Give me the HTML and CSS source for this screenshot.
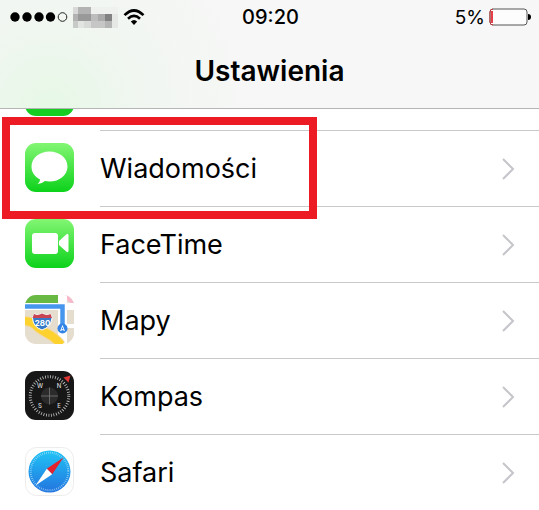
FILE: index.html
```html
<!DOCTYPE html>
<html lang="pl">
<head>
    <meta charset="UTF-8">
    <meta name="viewport" content="width=device-width, initial-scale=1.0">
    <title>Ustawienia</title>
    <link rel="stylesheet" href="styles.css">
</head>
<body>
    <header class="top-bar">
        <div class="status-bar">
            <div class="status-left">
                <svg class="signal" width="58" height="12" viewBox="0 0 58 12">
                    <circle cx="5" cy="6" r="4.7"/>
                    <circle cx="17" cy="6" r="4.7"/>
                    <circle cx="29" cy="6" r="4.7"/>
                    <circle cx="40.5" cy="6" r="4.7"/>
                    <circle cx="52.5" cy="6" r="4.3" fill="none" stroke="#222"/>
                </svg>
                <svg class="carrier" width="45" height="21" viewBox="0 0 45 21" shape-rendering="crispEdges">
                    <rect width="45" height="21" fill="#e6e8e6"/>
                    <rect y="0" width="5" height="7" fill="#d8d9d8"/>
                    <rect x="5" width="13" height="7" fill="#b3b3b3"/>
                    <rect x="18" width="27" height="7" fill="#eff1ef"/>
                    <rect y="7" width="5" height="7" fill="#b2b2b2"/>
                    <rect x="5" y="7" width="13" height="7" fill="#999"/>
                    <rect x="18" y="7" width="7" height="7" fill="#bdbdbd"/>
                    <rect x="25" y="7" width="7" height="7" fill="#aaa"/>
                    <rect x="32" y="7" width="7" height="7" fill="#828282"/>
                    <rect y="14" width="5" height="7" fill="#c8cac8"/>
                    <rect x="5" y="14" width="6" height="7" fill="#e1e4e1"/>
                    <rect x="11" y="14" width="7" height="7" fill="#d7dad7"/>
                    <rect x="18" y="14" width="14" height="7" fill="#c6c6c6"/>
                    <rect x="32" y="14" width="7" height="7" fill="#b4b4b4"/>
                </svg>
                <svg class="wifi" width="22" height="17" viewBox="0 0 22 17" fill="none" stroke="#000" stroke-width="2.6">
                    <path d="M1.5 6.2Q11-3.2 20.500 6.2"/>
                    <path d="M5 9.8Q11 4 17 9.8"/>
                    <path d="M7.8 12.600Q11 9.6 14.200 12.600L11 16Z" fill="#000" stroke="none"/>
                </svg>
            </div>
            <time class="clock">09:20</time>
            <div class="status-right">
                <span>5%</span>
                <svg class="battery" width="42" height="18" viewBox="0 0 42 18">
                    <rect x="1" y="1" width="37" height="16" rx="3" fill="#fdfdfd" stroke="#555"/>
                    <path d="M4 1Q1 1 1 4V14Q1 17 4 17" fill="none" stroke="#b33"/>
                    <rect x="2" y="3" width="2" height="12" fill="#e8404a"/>
                    <path d="M39 6Q42 6 42 9Q42 12 39 12Z"/>
                </svg>
            </div>
        </div>
        <h1>Ustawienia</h1>
    </header>

    <main class="settings-list">
        <!-- row scrolled under the top bar -->
        <div class="row row-clipped">
            <svg class="icon" viewBox="0 0 49 49"><rect width="49" height="49" rx="11" fill="#16cd22"/></svg>
            <div class="row-body"></div>
        </div>

        <a class="row highlighted" href="#messages">
            <svg class="icon" viewBox="0 0 49 49">
                <defs>
                    <linearGradient id="green" x1="0" y1="0" x2="0" y2="1">
                        <stop offset="0" stop-color="#83f673"/>
                        <stop offset="1" stop-color="#0cd21b"/>
                    </linearGradient>
                </defs>
                <rect width="49" height="49" rx="11" fill="url(#green)"/>
                <path d="M24.5 8.5C14.5 8.5 6.5 15 6.5 23.5C6.5 29 9.5 33.5 15 36.5C15 38.5 14 39.7 12.5 41C15.8 40.8 18.2 39.5 19.8 38.1C21.3 38.4 22.9 38.6 24.5 38.6C34.5 38.6 42.5 32 42.5 23.5C42.5 15 34.5 8.5 24.5 8.5Z" fill="#fff"/>
            </svg>
            <div class="row-body">
                <span>Wiadomości</span>
                <svg class="chevron" viewBox="0 0 14 22"><path d="M2 1L12 11L2 21"/></svg>
            </div>
        </a>

        <a class="row" href="#facetime">
            <svg class="icon" viewBox="0 0 49 49">
                <rect width="49" height="49" rx="11" fill="url(#green)"/>
                <rect x="7" y="14" width="26" height="21" rx="3" fill="#fff"/>
                <path d="M34 22L41.5 15.2Q43.5 14 43.5 16.5V31.5Q43.5 34 41.5 32.8L34 26Z" fill="#fff"/>
            </svg>
            <div class="row-body">
                <span>FaceTime</span>
                <svg class="chevron" viewBox="0 0 14 22"><path d="M2 1L12 11L2 21"/></svg>
            </div>
        </a>

        <a class="row" href="#maps">
            <svg class="icon" viewBox="0 0 49 49">
                <defs>
                    <clipPath id="tile"><rect width="49" height="49" rx="11"/></clipPath>
                </defs>
                <g clip-path="url(#tile)">
                    <rect width="49" height="49" fill="#e5ddce"/>
                    <rect width="34" height="8" fill="#68b944"/>
                    <path d="M41 0H49V8H46Q41 6 41 0Z" fill="#f8b8cb"/>
                    <path d="M0 8H49V15H0Z" fill="#fff"/>
                    <path d="M33 0H42V49H33Z" fill="#fff"/>
                    <path d="M41 29H49V33H41Z" fill="#fff"/>
                    <path d="M-2 26C8 26 10 30 15 34C21 39 27 38 36 50" fill="none" stroke="#f4d79a" stroke-width="10"/>
                    <path d="M-2 26C8 26 10 30 15 34C21 39 27 38 36 50" fill="none" stroke="#fdd22e" stroke-width="8"/>
                    <path d="M0 11.5H37.5V34" fill="none" stroke="#4796ee" stroke-width="4.5"/>
                    <path d="M9 19Q13 21 17 18.5Q21 21 25.5 19L27 23Q26 32 17 35Q8 32 7.5 23Z" fill="#3579c8" stroke="#fff"/>
                    <path d="M9 19Q13 21 17 18.5Q21 21 25.5 19L27 23H7.5Z" fill="#c84452"/>
                    <text class="shield-text" x="17.5" y="30.5" text-anchor="middle">280</text>
                    <circle cx="37.5" cy="33.5" r="5" fill="#3184e6"/>
                    <path d="M37.5 29.8L40 36.3L37.5 35L35 36.3Z" fill="#fff"/>
                    <path d="M37.5 32L38.5 34.5L37.5 34L36.5 34.5Z" fill="#3184e6"/>
                </g>
            </svg>
            <div class="row-body">
                <span>Mapy</span>
                <svg class="chevron" viewBox="0 0 14 22"><path d="M2 1L12 11L2 21"/></svg>
            </div>
        </a>

        <a class="row" href="#compass">
            <svg class="icon" viewBox="0 0 49 49">
                <rect width="49" height="49" rx="11" fill="#171717"/>
                <circle cx="24.5" cy="25" r="19.3" fill="none" stroke="#c5c5c5" stroke-width="3" stroke-dasharray="0.8 1.726"/>
                <circle cx="24.5" cy="25" r="8.5" fill="#2b2b2b"/>
                <path d="M24.5 16.5V33.5M16 25H33" stroke="#777" stroke-width="0.8"/>
                <path d="M38.5 6.5L45.5 4.5L43.5 11.5Z" fill="#db3535"/>
                <g class="compass-text" text-anchor="middle">
                    <text x="15" y="17">W</text>
                    <text x="34" y="17">N</text>
                    <text x="15" y="37">S</text>
                    <text x="34" y="37">E</text>
                </g>
            </svg>
            <div class="row-body">
                <span>Kompas</span>
                <svg class="chevron" viewBox="0 0 14 22"><path d="M2 1L12 11L2 21"/></svg>
            </div>
        </a>

        <a class="row" href="#safari">
            <svg class="icon" viewBox="0 0 49 49">
                <defs>
                    <linearGradient id="blue" x1="0" y1="0" x2="0" y2="1">
                        <stop offset="0" stop-color="#20c4f6"/>
                        <stop offset="1" stop-color="#2374df"/>
                    </linearGradient>
                </defs>
                <rect x="0.5" y="0.5" width="48" height="48" rx="11" fill="#fff" stroke="#eeebeb"/>
                <circle cx="24.5" cy="24.5" r="21" fill="url(#blue)"/>
                <circle cx="24.5" cy="24.5" r="18.8" fill="none" stroke="#a9dcf8" stroke-width="2" stroke-dasharray="0.6 1.369"/>
                <path d="M38.5 10.5L21.8 21.8L27.2 27.2Z" fill="#e3202b"/>
                <path d="M10.5 38.5L21.8 21.8L27.2 27.2Z" fill="#fff"/>
            </svg>
            <div class="row-body">
                <span>Safari</span>
                <svg class="chevron" viewBox="0 0 14 22"><path d="M2 1L12 11L2 21"/></svg>
            </div>
        </a>
    </main>
</body>
</html>
```

FILE: styles.css
```css
*, *::after { box-sizing: border-box; }
body { margin: 0; background: #fff; color: #000; font-family: Inter, "Liberation Sans", sans-serif; }

.top-bar { height: 109px; background: radial-gradient(circle at 50px 108px, #e6f8e6 0, #f1f6f1 90px, #f7f7f7 220px); border-bottom: 1px solid #b5b5b7; }
.status-bar { display: grid; grid-template-columns: 1fr auto 1fr; align-items: center; height: 34px; padding: 0 8px 0 10px; font-size: 20px; }
.status-left { display: flex; align-items: center; gap: 5px; }
.status-right { display: flex; align-items: center; justify-content: flex-end; gap: 4px; font-size: 19px; }
.clock { font-weight: 500; }
.top-bar h1 { margin: 20px 0 0; text-align: center; font-size: 28px; line-height: 34px; font-weight: 600; }

.settings-list { overflow: hidden; }
.row { position: relative; display: flex; align-items: center; gap: 26px; height: 76px; padding-left: 25px; color: #000; font-size: 27px; text-decoration: none; }
.row-body { flex: 1; display: flex; align-items: center; justify-content: space-between; height: 100%; padding-right: 24px; border-bottom: 1px solid #c9c9cc; }

.icon { flex: none; width: 49px; height: 49px; margin-bottom: 4px; }
.chevron { width: 14px; height: 22px; fill: none; stroke: #c5c5ca; stroke-width: 2; }
.shield-text { font-size: 8px; font-weight: 700; fill: #fff; }
.compass-text { font-size: 6px; font-weight: 500; fill: #ddd; }

.row-clipped { height: 22px; align-items: flex-end; overflow: hidden; }
.row-clipped .icon { margin-bottom: 15px; }

/* red frame around the selected row */
.highlighted::after { content: ""; position: absolute; z-index: 1; top: -14px; bottom: -12px; left: 2px; width: 315px; border: 8px solid #ed1c24; }
```
